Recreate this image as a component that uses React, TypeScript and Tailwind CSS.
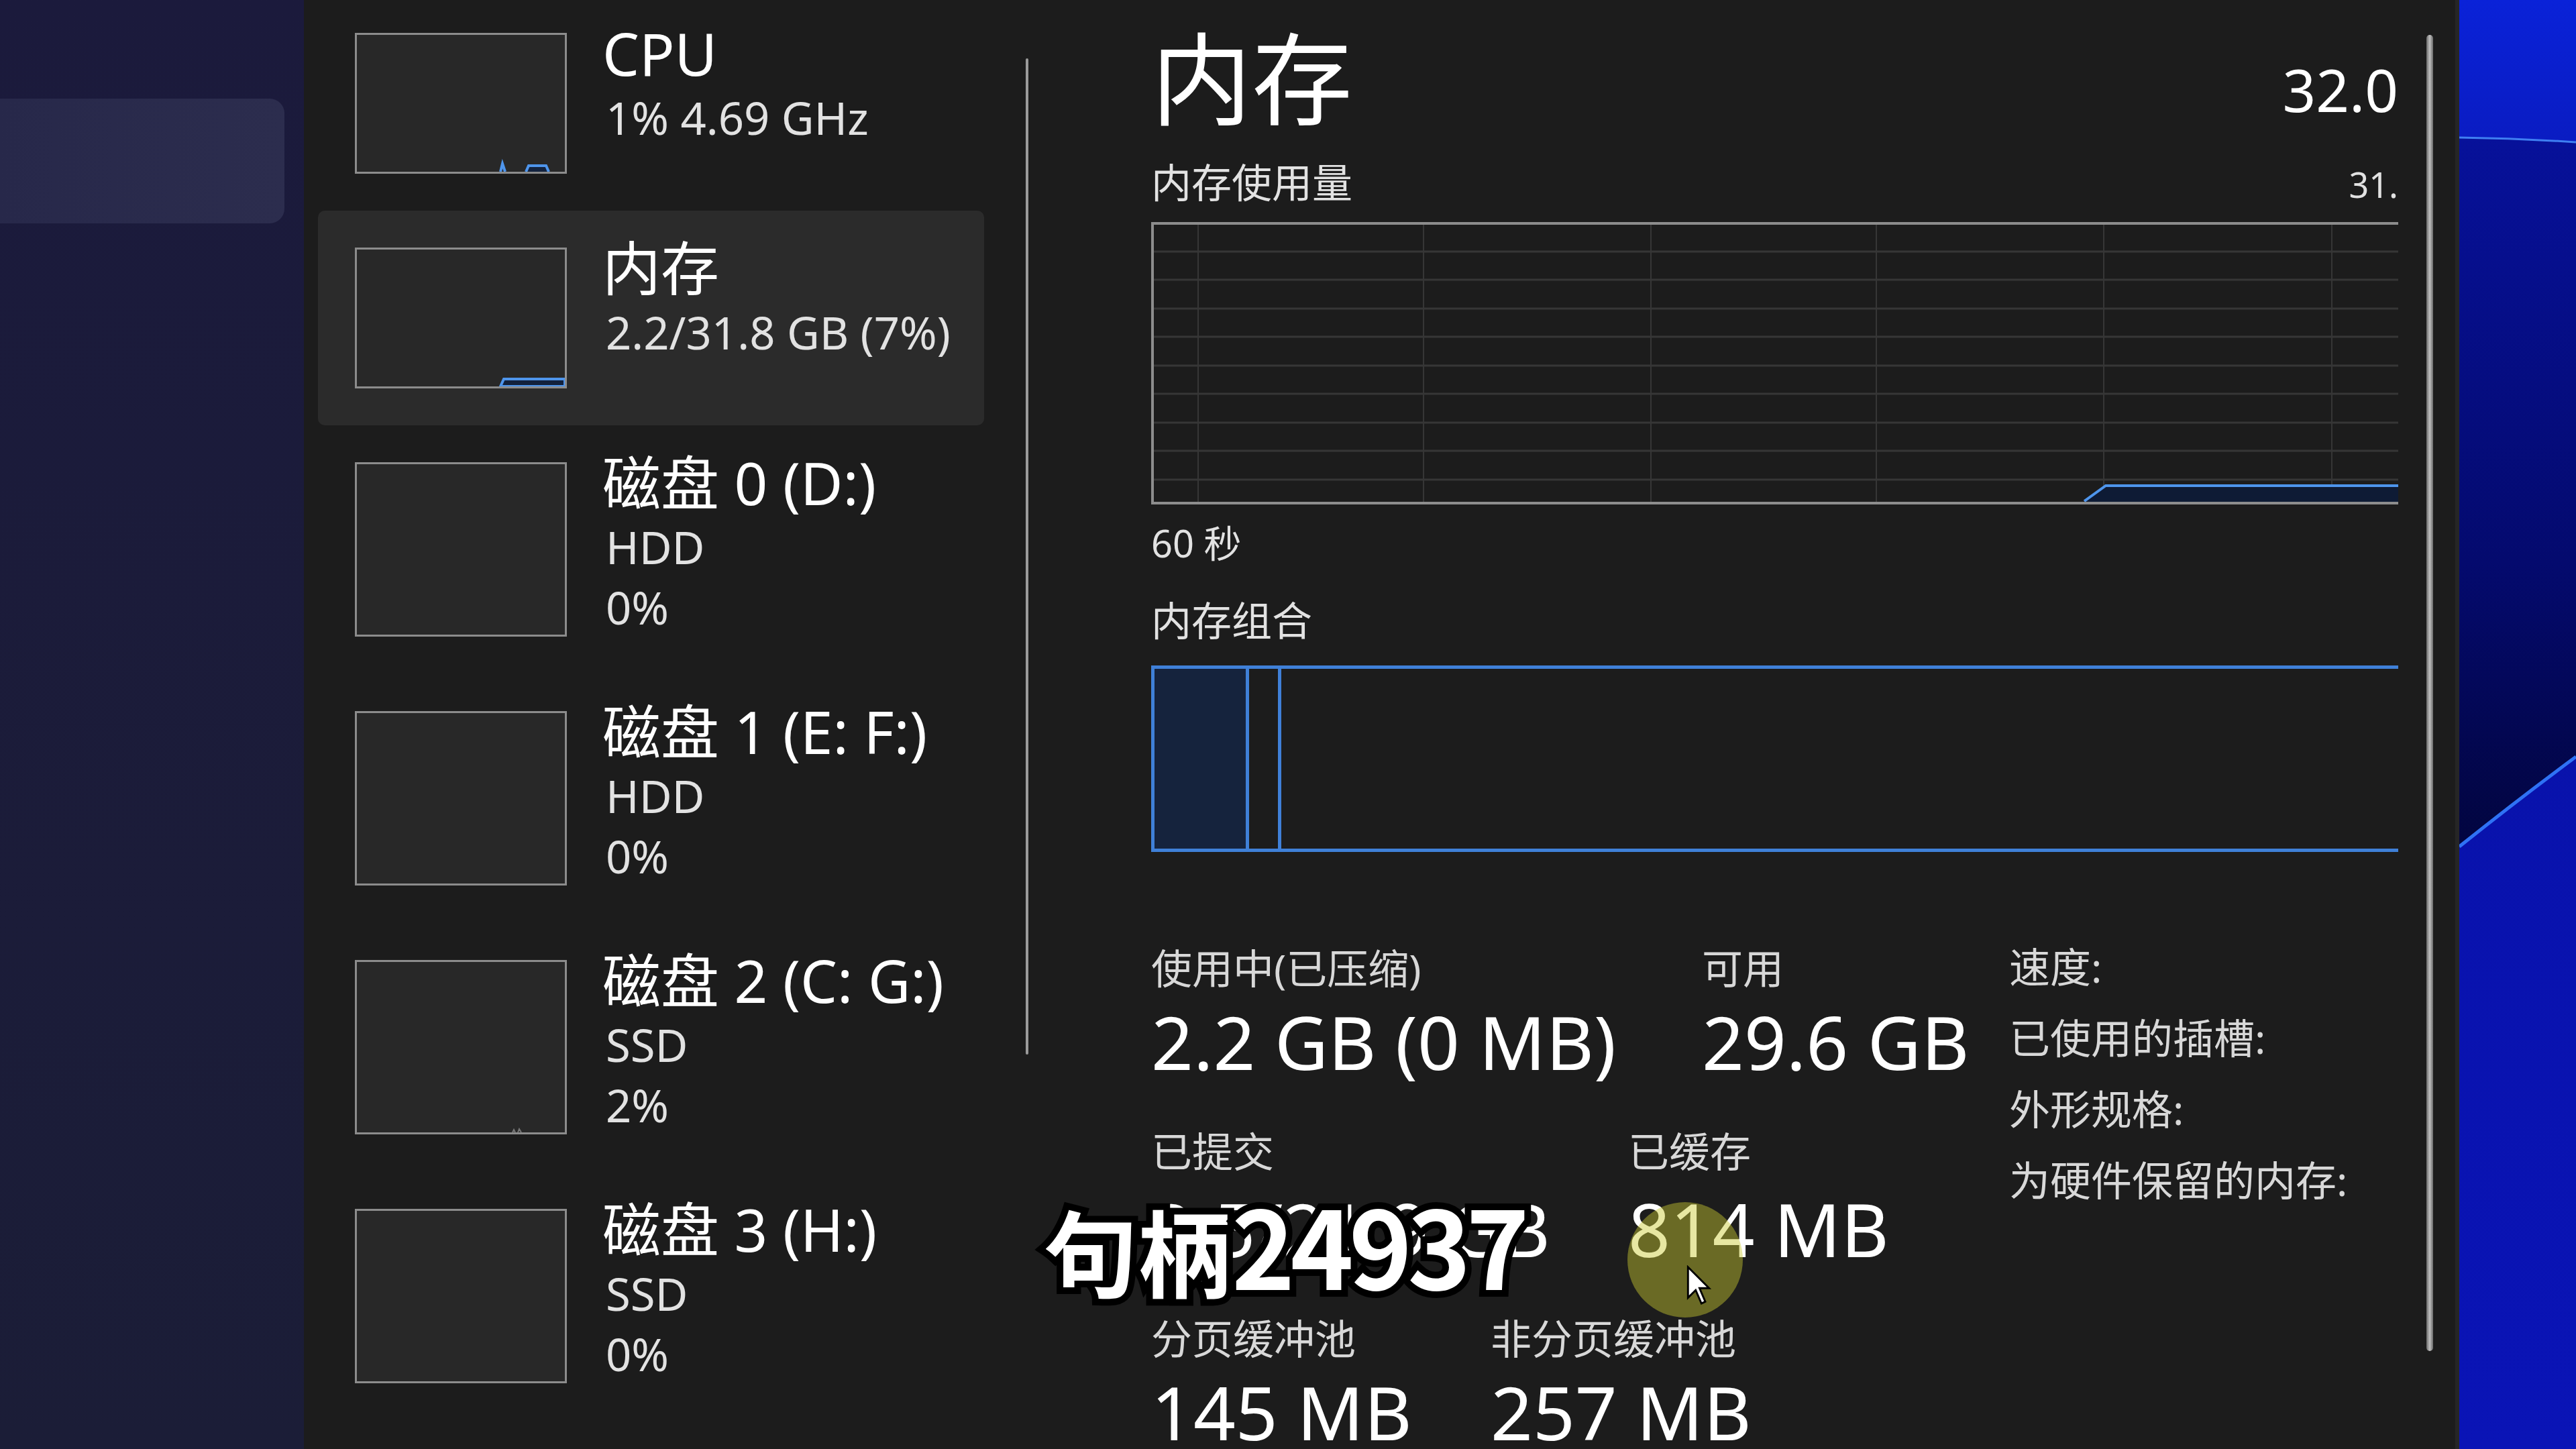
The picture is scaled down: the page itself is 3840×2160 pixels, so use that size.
import clsx from "clsx";
import type { ReactNode } from "react";

function Thumb({ tall, children }: { tall?: boolean; children?: ReactNode }) {
  return (
    <div
      className={clsx(
        "w-[316px] shrink-0 border-[3px] border-[#8c8c8c] bg-[#282828]",
        tall ? "h-[260px]" : "h-[210px]"
      )}
    >
      {children}
    </div>
  );
}

function SideItem({
  title,
  lines,
  tall,
  selected,
  graph,
}: {
  title: string;
  lines: string[];
  tall?: boolean;
  selected?: boolean;
  graph?: ReactNode;
}) {
  return (
    <div className={clsx("flex gap-[53px] rounded-[10px] p-[55px]", selected && "bg-[#2b2b2b]")}>
      <Thumb tall={tall}>{graph}</Thumb>
      <div className="flex flex-col whitespace-nowrap">
        <div className="text-[87px] leading-[60px] text-white">{title}</div>
        <div className="mt-[21px] flex flex-col pl-[5px] text-[67px] leading-[90px] text-[#e2e2e2]">
          {lines.map((l) => (
            <div key={l}>{l}</div>
          ))}
        </div>
      </div>
    </div>
  );
}

function Stat({
  label,
  value,
  gap = "mt-[3px]",
  className,
}: {
  label: string;
  value: string;
  gap?: string;
  className?: string;
}) {
  return (
    <div className={clsx("flex flex-col whitespace-nowrap", className)}>
      <div className="text-[61px] leading-[80px] text-[#d8d8d8]">{label}</div>
      <div className={clsx("text-[110px] leading-[130px] text-white", gap)}>{value}</div>
    </div>
  );
}

const hLines = [40, 82, 125, 167, 210, 252, 295, 337, 380];
const vLines = [66, 402, 741, 1077, 1416, 1756];

function UsageGraph() {
  return (
    <div className="mt-[19px] h-[421px] w-[1900px] border-y-[4px] border-l-[4px] border-[#8d8d8d]">
      <svg className="block h-full w-full" viewBox="0 0 1896 413" preserveAspectRatio="none">
        {hLines.map((y) => (
          <line key={y} x1="0" x2="1896" y1={y} y2={y} stroke="#363636" strokeWidth="3" />
        ))}
        {vLines.map((x) => (
          <line key={x} x1={x} x2={x} y1="0" y2="413" stroke="#363636" strokeWidth="2" />
        ))}
        <path d="M1387 413 L1419 389 L1896 389 L1896 413 Z" fill="#0e1b35" />
        <path d="M1387 412 L1419 389 L1896 389" fill="none" stroke="#4e95ec" strokeWidth="4" />
      </svg>
    </div>
  );
}

function Wallpaper() {
  return (
    <svg className="block h-[2160px] w-[174px] shrink-0" viewBox="0 0 174 2160" preserveAspectRatio="none">
      <defs>
        <linearGradient id="wtop" x1="0" y1="0" x2="0" y2="1">
          <stop offset="0" stopColor="#0a22d8" />
          <stop offset="1" stopColor="#0a1cc2" />
        </linearGradient>
        <linearGradient id="wmid" x1="0" y1="0" x2="0" y2="1">
          <stop offset="0" stopColor="#07119a" />
          <stop offset="0.6" stopColor="#040a6e" />
          <stop offset="1" stopColor="#02053f" />
        </linearGradient>
        <linearGradient id="wbot" x1="0" y1="0" x2="0" y2="1">
          <stop offset="0" stopColor="#0710a0" />
          <stop offset="1" stopColor="#0a14b6" />
        </linearGradient>
      </defs>
      <rect width="174" height="2160" fill="url(#wbot)" />
      <rect width="174" height="212" fill="url(#wtop)" />
      <path d="M0 205 Q87 206 174 212 L174 1128 Q90 1190 0 1262 Z" fill="url(#wmid)" />
      <path d="M0 205 Q87 206 174 212" fill="none" stroke="#3f7ff2" strokeWidth="3" />
      <path d="M0 1262 Q90 1190 174 1128" fill="none" stroke="#2f72f5" strokeWidth="5" />
    </svg>
  );
}

export default function App() {
  return (
    <div className="relative flex h-[2160px] w-[3840px] overflow-hidden bg-[#1c1c1c] font-['Noto_Sans','Noto_Sans_CJK_SC',sans-serif]">
      {/* desktop behind, left */}
      <div className="h-full w-[453px] shrink-0 bg-gradient-to-b from-[#1b1a3c] to-[#1b1d37] pt-[147px]">
        <div className="h-[186px] w-[424px] rounded-r-[22px] bg-gradient-to-r from-[#27284a] to-[#2c2d4e]" />
      </div>

      {/* task manager window */}
      <div className="flex h-full w-[3213px] shrink-0 bg-[#1c1c1c]">
        {/* sidebar */}
        <div className="ml-[21px] -mt-[6px] flex w-[993px] shrink-0 flex-col">
          <SideItem
            title="CPU"
            lines={["1% 4.69 GHz"]}
            graph={
              <svg className="block h-full w-full" viewBox="0 0 310 204" preserveAspectRatio="none">
                <path d="M214 204 L217 192 L221 204" fill="none" stroke="#4e95ec" strokeWidth="4" />
                <path d="M252 204 L256 195 L282 195 L286 204" fill="#13233f" stroke="#4e95ec" strokeWidth="4" />
              </svg>
            }
          />
          <SideItem
            title="内存"
            lines={["2.2/31.8 GB (7%)"]}
            selected
            graph={
              <svg className="block h-full w-full" viewBox="0 0 310 204" preserveAspectRatio="none">
                <path d="M214 204 L219 193 L310 193 L310 204 Z" fill="#12213d" stroke="#4e95ec" strokeWidth="4" />
              </svg>
            }
          />
          <SideItem title="磁盘 0 (D:)" lines={["HDD", "0%"]} tall />
          <SideItem title="磁盘 1 (E: F:)" lines={["HDD", "0%"]} tall />
          <SideItem
            title="磁盘 2 (C: G:)"
            lines={["SSD", "2%"]}
            tall
            graph={
              <svg className="block h-full w-full" viewBox="0 0 310 254" preserveAspectRatio="none">
                <path d="M232 254 L234 250 L236 254 M240 254 L242 249 L245 254" fill="none" stroke="#777" strokeWidth="2" />
              </svg>
            }
          />
          <SideItem title="磁盘 3 (H:)" lines={["SSD", "0%"]} tall />
        </div>
        <div className="ml-[62px] mt-[87px] h-[1485px] w-[4px] shrink-0 rounded-full bg-[#9a9a9a]" />

        {/* main panel */}
        <div className="ml-[183px] flex w-[1859px] shrink-0 flex-col overflow-hidden pt-[17px] text-white">
          <div className="flex items-start justify-between whitespace-nowrap">
            <div className="text-[150px] leading-[200px]">内存</div>
            <div className="mt-[66px] text-[87px] leading-[100px]">32.0</div>
          </div>
          <div className="mt-[15px] flex items-start justify-between whitespace-nowrap">
            <div className="text-[60px] leading-[80px] text-[#e2e2e2]">内存使用量</div>
            <div className="mt-[6px] text-[52px] leading-[74px] text-[#e2e2e2]">31.</div>
          </div>
          <UsageGraph />
          <div className="mt-[22px] text-[56px] leading-[70px] text-[#e2e2e2]">60 秒</div>
          <div className="mt-[41px] text-[60px] leading-[80px] text-[#e2e2e2]">内存组合</div>
          <div className="mt-[27px] flex h-[278px] w-[1900px] shrink-0 border-[5px] border-[#3f80d8]">
            <div className="h-full w-[141px] border-r-[5px] border-[#3f80d8] bg-[#15233d]" />
            <div className="h-full w-[48px] border-r-[5px] border-[#3f80d8]" />
          </div>

          <div className="mt-[134px] flex">
            <div className="flex w-[1279px] shrink-0 flex-col">
              <div className="flex">
                <Stat className="w-[821px]" label="使用中(已压缩)" value="2.2 GB (0 MB)" />
                <Stat label="可用" value="29.6 GB" />
              </div>
              <div className="mt-[60px] flex">
                <Stat className="w-[711px]" label="已提交" value="2.5/21.9 GB" gap="mt-[9px]" />
                <Stat label="已缓存" value="814 MB" gap="mt-[9px]" />
              </div>
              <div className="mt-[60px] flex">
                <Stat className="w-[506px]" label="分页缓冲池" value="145 MB" />
                <Stat label="非分页缓冲池" value="257 MB" />
              </div>
            </div>
            <div className="-mt-[15px] flex flex-col whitespace-nowrap text-[61px] leading-[106px] text-[#d8d8d8]">
              <div>速度:</div>
              <div>已使用的插槽:</div>
              <div>外形规格:</div>
              <div>为硬件保留的内存:</div>
            </div>
          </div>
        </div>

        <div className="ml-[42px] mt-[52px] h-[1962px] w-[10px] shrink-0 rounded-full bg-gradient-to-r from-[#6a6a6a] via-[#c2c2c2] to-[#6a6a6a]" />
        <div className="ml-[33px] h-full w-[6px] shrink-0 bg-[#262626]" />
      </div>

      <Wallpaper />

      {/* cursor highlight + pointer */}
      <div className="absolute left-[2426px] top-[1792px] h-[172px] w-[172px] rounded-full bg-[#caca30]/45" />
      <svg className="absolute left-[2512px] top-[1886px] h-[60px] w-[40px]" viewBox="0 0 13 21">
        <path d="M1 1 L1 17 L5 13 L8 20 L10 19 L7 12 L12 12 Z" fill="#fff" stroke="#000" strokeWidth="1" />
      </svg>

      {/* video subtitle */}
      <div className="absolute left-[1556px] top-[1753px] whitespace-nowrap font-['Noto_Sans_CJK_SC',sans-serif] font-bold leading-[200px] text-white [-webkit-text-stroke:20px_#000] [paint-order:stroke_fill]">
        <span className="text-[140px]">句柄</span>
        <span className="text-[160px] tracking-[-7px]">24937</span>
      </div>
    </div>
  );
}
